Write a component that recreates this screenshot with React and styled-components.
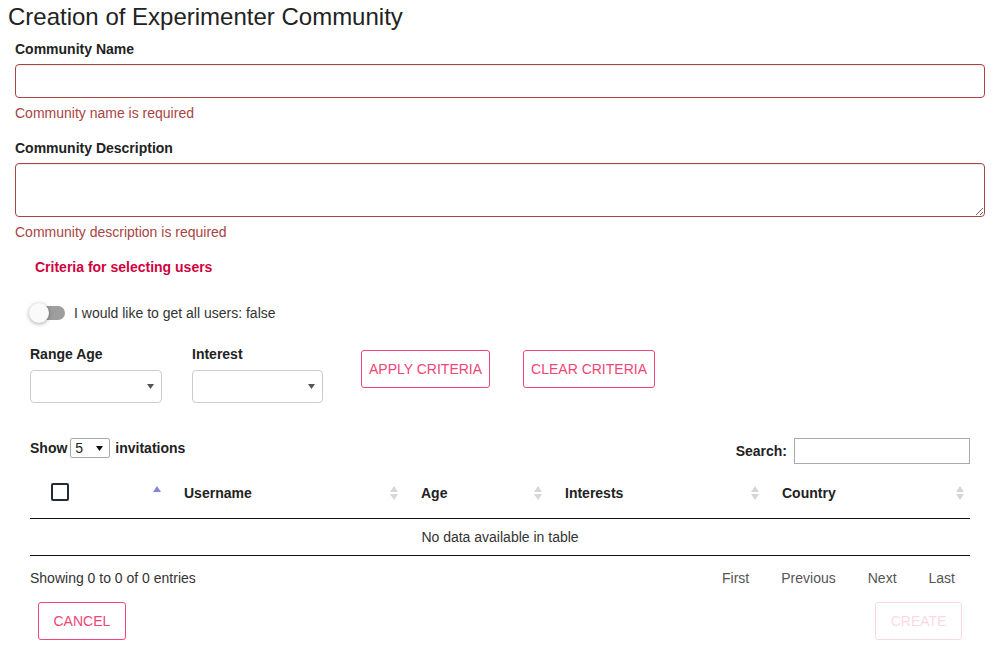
import React from 'react';
import styled, { createGlobalStyle } from 'styled-components';

const PINK = '#ef4577';
const ERR = '#a94442';

const GlobalStyle = createGlobalStyle`
  html, body { margin: 0; padding: 0; background: #fff; }
  body {
    font-family: "Liberation Sans", Arial, Helvetica, sans-serif;
    font-size: 14px;
    line-height: 20px;
    color: #333;
  }
  *, *::before, *::after { box-sizing: border-box; }
`;

const Page = styled.div`
  padding: 4px 13px 20px 8px;
`;

const Title = styled.h3`
  margin: 0 0 9px;
  font-size: 24px;
  line-height: 26px;
  font-weight: 400;
  color: #222;
`;

const Form = styled.form`
  padding-left: 7px;
  display: flex;
  flex-direction: column;
`;

const FieldGroup = styled.div`
  display: flex;
  flex-direction: column;
  & + & { margin-top: 15px; }
`;

const Label = styled.label`
  display: block;
  font-weight: 700;
  color: #222;
  margin-bottom: ${p => p.$mb ?? 5}px;
`;

const TextInput = styled.input`
  display: block;
  width: 100%;
  height: 34px;
  padding: 6px 12px;
  font: inherit;
  color: #555;
  border: 1px solid ${ERR};
  border-radius: 4px;
  box-shadow: inset 0 1px 1px rgba(0,0,0,.075);
  outline: none;
`;

const TextArea = styled.textarea`
  display: block;
  width: 100%;
  height: 54px;
  padding: 6px 12px;
  font: inherit;
  color: #555;
  border: 1px solid ${ERR};
  border-radius: 4px;
  box-shadow: inset 0 1px 1px rgba(0,0,0,.075);
  outline: none;
  resize: vertical;
`;

const HelpText = styled.span`
  margin-top: 5px;
  color: ${ERR};
`;

const Criteria = styled.section`
  margin-top: 15px;
  padding-left: 15px;
  display: flex;
  flex-direction: column;
`;

const CriteriaTitle = styled.div`
  padding-left: 5px;
  font-weight: 700;
  color: #d0023e;
`;

const ToggleRow = styled.div`
  margin-top: 24px;
  height: 24px;
  display: flex;
  align-items: center;
  gap: 8px;
  color: #333;
`;

const Toggle = styled.span`
  position: relative;
  display: inline-block;
  width: 36px;
  height: 24px;
  flex: none;
`;

const Track = styled.span`
  position: absolute;
  left: 8px;
  top: 5px;
  width: 27px;
  height: 14px;
  border-radius: 7px;
  background: #9e9e9e;
`;

const Thumb = styled.span`
  position: absolute;
  left: -1px;
  top: 2px;
  width: 20px;
  height: 20px;
  border-radius: 50%;
  background: #fafafa;
  box-shadow: 0 1px 4px rgba(0,0,0,.35);
`;

const CriteriaRow = styled.div`
  margin-top: 19px;
  display: flex;
  align-items: flex-start;
`;

const FieldCol = styled.div`
  width: ${p => p.$w}px;
  margin-right: ${p => p.$mr}px;
  display: flex;
  flex-direction: column;
`;

const SelectBox = styled.div`
  height: 33px;
  border: 1px solid #ccc;
  border-radius: 4px;
  background: #fff;
  display: flex;
  align-items: center;
  justify-content: flex-end;
  padding-right: 7px;
`;

const OutlineButton = styled.button`
  height: 38px;
  padding: 0 ${p => p.$pad ?? 7}px;
  margin-top: ${p => p.$mt ?? 0}px;
  margin-right: ${p => p.$mr ?? 0}px;
  border: 1px solid ${PINK};
  border-radius: 3px;
  background: #fff;
  color: ${PINK};
  font-family: inherit;
  font-size: 14px;
  text-transform: uppercase;
  opacity: ${p => (p.disabled ? 0.2 : 1)};
  cursor: ${p => (p.disabled ? 'default' : 'pointer')};
`;

const TableSection = styled.section`
  margin: 35px 15px 0;
  display: flex;
  flex-direction: column;
`;

const TopBar = styled.div`
  display: flex;
  justify-content: space-between;
  align-items: flex-start;
`;

const LengthControl = styled.div`
  display: flex;
  align-items: center;
  font-weight: 700;
  color: #222;
`;

const SmallSelect = styled.div`
  width: 40px;
  height: 20px;
  margin: 0 5px 0 3px;
  padding: 0 6px 0 4px;
  border: 1px solid #a9a9a9;
  border-radius: 2px;
  display: flex;
  align-items: center;
  justify-content: space-between;
  font-weight: 400;
  color: #222;
`;

const SearchControl = styled.div`
  display: flex;
  align-items: center;
  font-weight: 700;
  color: #222;
`;

const SearchInput = styled.input`
  width: 176px;
  height: 26px;
  margin-left: 7px;
  border: 1px solid #aaa;
  border-radius: 0;
  padding: 3px;
  font: inherit;
  outline: none;
`;

const Table = styled.table`
  width: 100%;
  margin-top: 2px;
  border-collapse: separate;
  border-spacing: 0;
  table-layout: fixed;
`;

const Th = styled.th`
  height: 53px;
  padding: 1px ${p => p.$pr ?? 13}px 0 ${p => p.$pl ?? 10}px;
  border-bottom: 1px solid #111;
  vertical-align: middle;
  text-align: left;
`;

const ThInner = styled.div`
  display: flex;
  align-items: center;
  justify-content: space-between;
  font-weight: 700;
  color: #222;
`;

const Checkbox = styled.span`
  display: inline-block;
  width: 18px;
  height: 18px;
  margin-top: -1px;
  border: 2px solid #222a33;
  border-radius: 2px;
  background: #fff;
`;

const EmptyCell = styled.td`
  height: 37px;
  padding: 8px 10px;
  text-align: center;
  border-bottom: 1px solid #111;
  color: #333;
`;

const FooterBar = styled.div`
  margin-top: 12px;
  display: flex;
  justify-content: space-between;
  align-items: center;
`;

const Info = styled.div`
  color: #333;
`;

const Pager = styled.div`
  display: flex;
`;

const PageButton = styled.span`
  padding: 0 15px;
  margin-left: 2px;
  color: #555;
`;

const Actions = styled.div`
  margin-top: 14px;
  padding: 0 8px;
  display: flex;
  justify-content: space-between;
`;

const Caret = ({ color = '#555', w = 7, h = 5 }) => (
  <svg width={w} height={h} viewBox="0 0 7 5" aria-hidden="true">
    <polygon points="0,0 7,0 3.5,5" fill={color} />
  </svg>
);

const SortIcon = ({ asc }) => (
  <svg width="8" height="14" viewBox="0 0 8 14" aria-hidden="true">
    {asc ? (
      <polygon points="0,6 4,0 8,6" fill="#8585d9" />
    ) : (
      <>
        <polygon points="0,6 4,0 8,6" fill="#d6d6d6" />
        <polygon points="0,8 4,14 8,8" fill="#d6d6d6" />
      </>
    )}
  </svg>
);

const columns = [
  { key: 'sel', width: 144 },
  { key: 'Username', width: 237 },
  { key: 'Age', width: 144 },
  { key: 'Interests', width: 217 },
  { key: 'Country', width: 198, pr: 6 },
];

export default function App() {
  return (
    <>
      <GlobalStyle />
      <Page>
        <Title>Creation of Experimenter Community</Title>
        <Form onSubmit={e => e.preventDefault()}>
          <FieldGroup>
            <Label>Community Name</Label>
            <TextInput type="text" />
            <HelpText>Community name is required</HelpText>
          </FieldGroup>
          <FieldGroup>
            <Label>Community Description</Label>
            <TextArea />
            <HelpText>Community description is required</HelpText>
          </FieldGroup>

          <Criteria>
            <CriteriaTitle>Criteria for selecting users</CriteriaTitle>
            <ToggleRow>
              <Toggle>
                <Track />
                <Thumb />
              </Toggle>
              <span>I would like to get all users: false</span>
            </ToggleRow>
            <CriteriaRow>
              <FieldCol $w={132} $mr={30}>
                <Label $mb={6}>Range Age</Label>
                <SelectBox><Caret /></SelectBox>
              </FieldCol>
              <FieldCol $w={131} $mr={38}>
                <Label $mb={6}>Interest</Label>
                <SelectBox><Caret /></SelectBox>
              </FieldCol>
              <OutlineButton type="button" $mt={6} $mr={33}>Apply criteria</OutlineButton>
              <OutlineButton type="button" $mt={6}>Clear criteria</OutlineButton>
            </CriteriaRow>
          </Criteria>

          <TableSection>
            <TopBar>
              <LengthControl>
                Show
                <SmallSelect>
                  <span>5</span>
                  <Caret color="#111" />
                </SmallSelect>
                invitations
              </LengthControl>
              <SearchControl>
                Search:
                <SearchInput type="search" />
              </SearchControl>
            </TopBar>

            <Table>
              <colgroup>
                {columns.map(c => <col key={c.key} style={{ width: c.width }} />)}
              </colgroup>
              <thead>
                <tr>
                  <Th $pl={21}>
                    <ThInner>
                      <Checkbox />
                      <SortIcon asc />
                    </ThInner>
                  </Th>
                  {columns.slice(1).map(c => (
                    <Th key={c.key} $pr={c.pr}>
                      <ThInner>
                        <span>{c.key}</span>
                        <SortIcon />
                      </ThInner>
                    </Th>
                  ))}
                </tr>
              </thead>
              <tbody>
                <tr>
                  <EmptyCell colSpan={5}>No data available in table</EmptyCell>
                </tr>
              </tbody>
            </Table>

            <FooterBar>
              <Info>Showing 0 to 0 of 0 entries</Info>
              <Pager>
                <PageButton>First</PageButton>
                <PageButton>Previous</PageButton>
                <PageButton>Next</PageButton>
                <PageButton>Last</PageButton>
              </Pager>
            </FooterBar>

            <Actions>
              <OutlineButton type="button" $pad={14.5}>Cancel</OutlineButton>
              <OutlineButton type="button" $pad={14.5} disabled>Create</OutlineButton>
            </Actions>
          </TableSection>
        </Form>
      </Page>
    </>
  );
}
